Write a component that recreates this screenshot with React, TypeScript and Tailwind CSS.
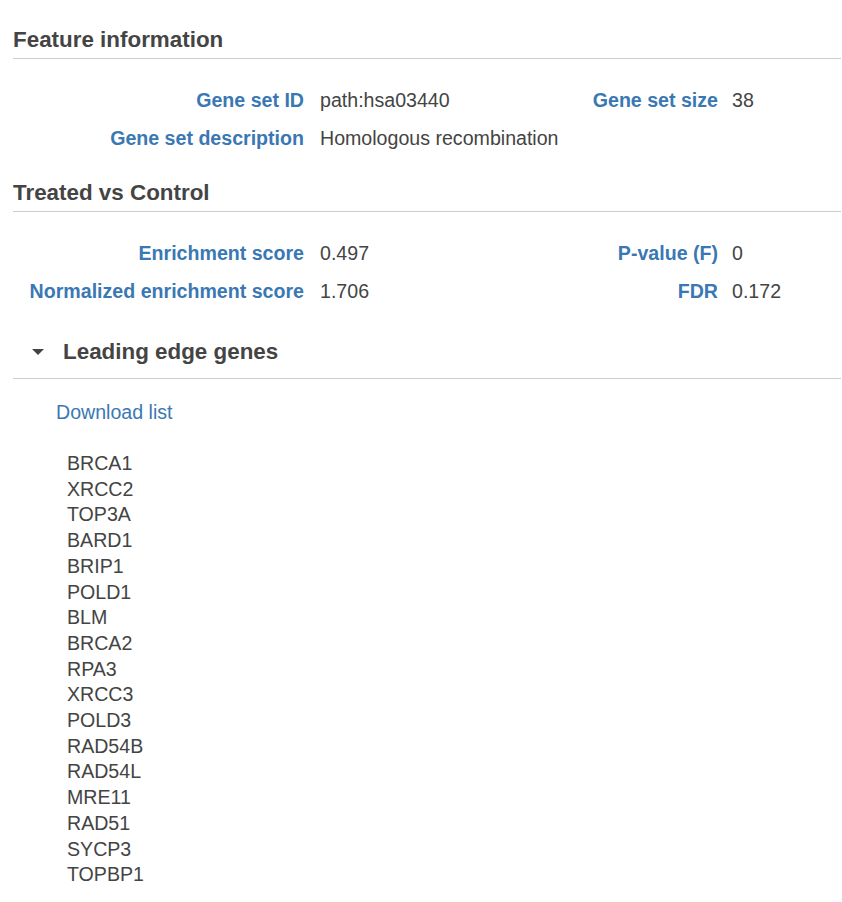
import React from "react";

const genes = [
  "BRCA1","XRCC2","TOP3A","BARD1","BRIP1","POLD1","BLM","BRCA2","RPA3","XRCC3","POLD3","RAD54B","RAD54L","MRE11","RAD51","SYCP3","TOPBP1",
];

function Heading({ children }: { children: React.ReactNode }) {
  return (
    <div className="border-b border-[#cccccc] pb-[4px] pt-[1px]">
      <h2 className="text-[22.4px] font-bold leading-[28px] text-[#444444]">{children}</h2>
    </div>
  );
}

function Pair({ label, value, right }: { label: string; value: string; right?: boolean }) {
  return (
    <div className="flex w-1/2 items-center">
      <div className="w-[291px] shrink-0 whitespace-nowrap text-right font-bold text-[#3a78b4]">{label}</div>
      <div className={right ? "whitespace-nowrap pl-[14px] text-[#444444]" : "whitespace-nowrap pl-[16px] text-[#444444]"}>{value}</div>
    </div>
  );
}

export default function App() {
  return (
    <div
      className="bg-white pl-[13px] pr-[1px] pt-[25px] text-[19.6px] text-[#444444]"
      style={{ fontFamily: '"Liberation Sans", Arial, sans-serif' }}
    >
      <Heading>Feature information</Heading>
      <div className="mt-[22px]">
        <div className="flex h-[38px] leading-[38px]">
          <Pair label="Gene set ID" value="path:hsa03440" />
          <Pair label="Gene set size" value="38" right />
        </div>
        <div className="flex h-[38px] leading-[38px]">
          <Pair label="Gene set description" value="Homologous recombination" />
        </div>
      </div>
      <div className="mt-[21px]">
        <Heading>Treated vs Control</Heading>
      </div>
      <div className="mt-[22px]">
        <div className="flex h-[38px] leading-[38px]">
          <Pair label="Enrichment score" value="0.497" />
          <Pair label="P-value (F)" value="0" right />
        </div>
        <div className="flex h-[38px] leading-[38px]">
          <Pair label="Normalized enrichment score" value="1.706" />
          <Pair label="FDR" value="0.172" right />
        </div>
      </div>
      <div className="mt-[27px] border-b border-[#cccccc] pb-[12px] pt-[1px]">
        <div className="flex items-center">
          <svg width="12" height="6" viewBox="0 0 12 6" className="ml-[19px] mr-[19px]">
            <polygon points="0,0 12,0 6,6" fill="#444444" />
          </svg>
          <h2 className="text-[22.4px] font-bold leading-[28px] text-[#444444]">Leading edge genes</h2>
        </div>
      </div>
      <div className="mt-[19px] pl-[43px] leading-[28px] text-[#3a78b4]">Download list</div>
      <div className="mt-[25px] pb-[14px] pl-[54px] leading-[25.7px] text-[#444444]">
        {genes.map((g) => (
          <div key={g}>{g}</div>
        ))}
      </div>
    </div>
  );
}
